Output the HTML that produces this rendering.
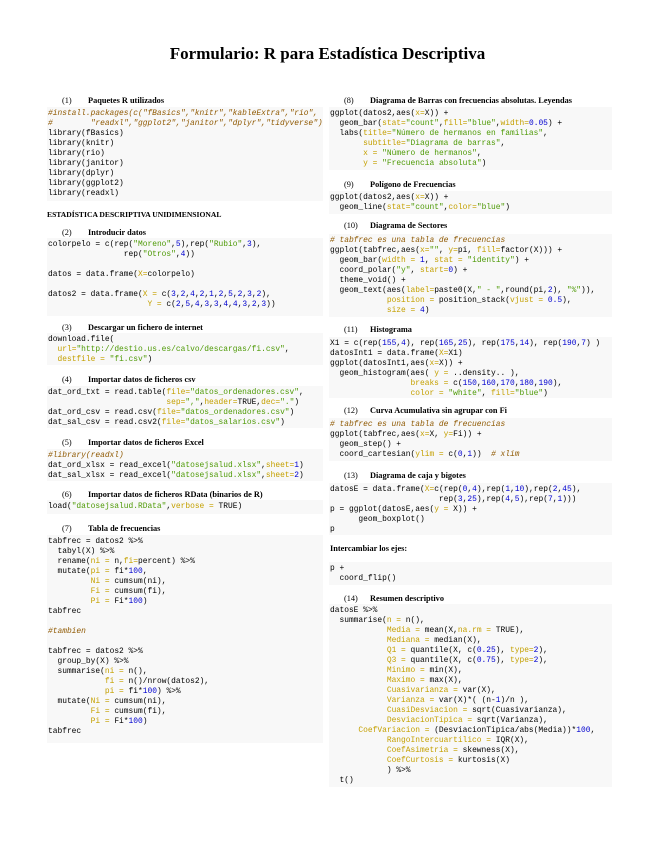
<!DOCTYPE html>
<html><head><meta charset="utf-8"><style>
body{margin:0;width:655px;height:848px;background:#fff;position:relative;overflow:hidden;font-family:"Liberation Serif",serif;color:#000}
.t{position:absolute;top:44px;left:0;width:655px;text-align:center;font-weight:bold;font-size:17px}
.h{position:absolute;font-size:8.3px;font-weight:bold;white-space:nowrap;line-height:10px}
.h i{font-style:normal;font-weight:normal;display:inline-block;width:26px}
pre{position:absolute;margin:0;background:#f8f8f8;font-family:"Liberation Mono",monospace;font-size:7.9px;line-height:10px;padding:2px 0 2px 1px;box-sizing:border-box;overflow:hidden;color:#000}
.L{left:47px;width:276px}.R{left:329px;width:283px}
.c{color:#8f5902;font-style:italic}.s{color:#4e9a06}.a{color:#c4a000}.n{color:#0000cf}.o{color:#000}
</style></head><body>
<div class="t">Formulario: R para Estadística Descriptiva</div>

<div class="h" style="left:62px;top:96px"><i>(1)</i>Paquetes R utilizados</div>
<pre class="L" style="top:107px;height:94px"><span class="c">#install.packages(c("fBasics","knitr","kableExtra","rio",
#        "readxl","ggplot2","janitor","dplyr","tidyverse"))</span>
library(fBasics)
library(knitr)
library(rio)
library(janitor)
library(dplyr)
library(ggplot2)
library(readxl)</pre>

<div class="h" style="left:47px;top:210px;font-size:7.6px">ESTADÍSTICA DESCRIPTIVA UNIDIMENSIONAL</div>

<div class="h" style="left:62px;top:228px"><i>(2)</i>Introducir datos</div>
<pre class="L" style="top:238px;height:78px">colorpelo <span class="o">=</span> c(rep(<span class="s">"Moreno"</span>,<span class="n">5</span>),rep(<span class="s">"Rubio"</span>,<span class="n">3</span>),
                rep(<span class="s">"Otros"</span>,<span class="n">4</span>))

datos <span class="o">=</span> data.frame(<span class="a">X=</span>colorpelo)

datos2 <span class="o">=</span> data.frame(<span class="a">X =</span> c(<span class="n">3</span>,<span class="n">2</span>,<span class="n">4</span>,<span class="n">2</span>,<span class="n">1</span>,<span class="n">2</span>,<span class="n">5</span>,<span class="n">2</span>,<span class="n">3</span>,<span class="n">2</span>),
                     <span class="a">Y =</span> c(<span class="n">2</span>,<span class="n">5</span>,<span class="n">4</span>,<span class="n">3</span>,<span class="n">3</span>,<span class="n">4</span>,<span class="n">4</span>,<span class="n">3</span>,<span class="n">2</span>,<span class="n">3</span>))</pre>

<div class="h" style="left:62px;top:323px"><i>(3)</i>Descargar un fichero de internet</div>
<pre class="L" style="top:333px;height:32px">download.file(
  <span class="a">url=</span><span class="s">"http://destio.us.es/calvo/descargas/fi.csv"</span>,
  <span class="a">destfile =</span> <span class="s">"fi.csv"</span>)</pre>

<div class="h" style="left:62px;top:375px"><i>(4)</i>Importar datos de ficheros csv</div>
<pre class="L" style="top:386px;height:42px">dat_ord_txt <span class="o">=</span> read.table(<span class="a">file=</span><span class="s">"datos_ordenadores.csv"</span>,
                         <span class="a">sep=</span><span class="s">","</span>,<span class="a">header=</span>TRUE,<span class="a">dec=</span><span class="s">"."</span>)
dat_ord_csv <span class="o">=</span> read.csv(<span class="a">file=</span><span class="s">"datos_ordenadores.csv"</span>)
dat_sal_csv <span class="o">=</span> read.csv2(<span class="a">file=</span><span class="s">"datos_salarios.csv"</span>)</pre>

<div class="h" style="left:62px;top:438px"><i>(5)</i>Importar datos de ficheros Excel</div>
<pre class="L" style="top:449px;height:32px"><span class="c">#library(readxl)</span>
dat_ord_xlsx <span class="o">=</span> read_excel(<span class="s">"datosejsalud.xlsx"</span>,<span class="a">sheet=</span><span class="n">1</span>)
dat_sal_xlsx <span class="o">=</span> read_excel(<span class="s">"datosejsalud.xlsx"</span>,<span class="a">sheet=</span><span class="n">2</span>)</pre>

<div class="h" style="left:62px;top:490px"><i>(6)</i>Importar datos de ficheros RData (binarios de R)</div>
<pre class="L" style="top:500px;height:14px">load(<span class="s">"datosejsalud.RData"</span>,<span class="a">verbose =</span> TRUE)</pre>

<div class="h" style="left:62px;top:524px"><i>(7)</i>Tabla de frecuencias</div>
<pre class="L" style="top:535px;height:208px">tabfrec <span class="o">=</span> datos2 <span class="o">%&gt;%</span>
  tabyl(X) <span class="o">%&gt;%</span>
  rename(<span class="a">ni =</span> n,<span class="a">fi=</span>percent) <span class="o">%&gt;%</span>
  mutate(<span class="a">pi =</span> fi<span class="o">*</span><span class="n">100</span>,
         <span class="a">Ni =</span> cumsum(ni),
         <span class="a">Fi =</span> cumsum(fi),
         <span class="a">Pi =</span> Fi<span class="o">*</span><span class="n">100</span>)
tabfrec

<span class="c">#tambien</span>

tabfrec <span class="o">=</span> datos2 <span class="o">%&gt;%</span>
  group_by(X) <span class="o">%&gt;%</span>
  summarise(<span class="a">ni =</span> n(),
            <span class="a">fi =</span> n()<span class="o">/</span>nrow(datos2),
            <span class="a">pi =</span> fi<span class="o">*</span><span class="n">100</span>) <span class="o">%&gt;%</span>
  mutate(<span class="a">Ni =</span> cumsum(ni),
         <span class="a">Fi =</span> cumsum(fi),
         <span class="a">Pi =</span> Fi<span class="o">*</span><span class="n">100</span>)
tabfrec</pre>

<div class="h" style="left:344px;top:96px"><i>(8)</i>Diagrama de Barras con frecuencias absolutas. Leyendas</div>
<pre class="R" style="top:107px;height:63px">ggplot(datos2,aes(<span class="a">x=</span>X)) <span class="o">+</span>
  geom_bar(<span class="a">stat=</span><span class="s">"count"</span>,<span class="a">fill=</span><span class="s">"blue"</span>,<span class="a">width=</span><span class="n">0.05</span>) <span class="o">+</span>
  labs(<span class="a">title=</span><span class="s">"Número de hermanos en familias"</span>,
       <span class="a">subtitle=</span><span class="s">"Diagrama de barras"</span>,
       <span class="a">x =</span> <span class="s">"Número de hermanos"</span>,
       <span class="a">y =</span> <span class="s">"Frecuencia absoluta"</span>)</pre>

<div class="h" style="left:344px;top:180px"><i>(9)</i>Polígono de Frecuencias</div>
<pre class="R" style="top:191px;height:23px">ggplot(datos2,aes(<span class="a">x=</span>X)) <span class="o">+</span>
  geom_line(<span class="a">stat=</span><span class="s">"count"</span>,<span class="a">color=</span><span class="s">"blue"</span>)</pre>

<div class="h" style="left:344px;top:221px"><i>(10)</i>Diagrama de Sectores</div>
<pre class="R" style="top:234px;height:83px"><span class="c"># tabfrec es una tabla de frecuencias</span>
ggplot(tabfrec,aes(<span class="a">x=</span><span class="s">""</span>, <span class="a">y=</span>pi, <span class="a">fill=</span>factor(X))) <span class="o">+</span>
  geom_bar(<span class="a">width =</span> <span class="n">1</span>, <span class="a">stat =</span> <span class="s">"identity"</span>) <span class="o">+</span>
  coord_polar(<span class="s">"y"</span>, <span class="a">start=</span><span class="n">0</span>) <span class="o">+</span>
  theme_void() <span class="o">+</span>
  geom_text(aes(<span class="a">label=</span>paste0(X,<span class="s">" - "</span>,round(pi,<span class="n">2</span>), <span class="s">"%"</span>)),
            <span class="a">position =</span> position_stack(<span class="a">vjust =</span> <span class="n">0.5</span>),
            <span class="a">size =</span> <span class="n">4</span>)</pre>

<div class="h" style="left:344px;top:325px"><i>(11)</i>Histograma</div>
<pre class="R" style="top:337px;height:61px">X1 <span class="o">=</span> c(rep(<span class="n">155</span>,<span class="n">4</span>), rep(<span class="n">165</span>,<span class="n">25</span>), rep(<span class="n">175</span>,<span class="n">14</span>), rep(<span class="n">190</span>,<span class="n">7</span>) )
datosInt1 <span class="o">=</span> data.frame(<span class="a">X=</span>X1)
ggplot(datosInt1,aes(<span class="a">x=</span>X)) <span class="o">+</span>
  geom_histogram(aes( <span class="a">y =</span> ..density.. ),
                 <span class="a">breaks =</span> c(<span class="n">150</span>,<span class="n">160</span>,<span class="n">170</span>,<span class="n">180</span>,<span class="n">190</span>),
                 <span class="a">color =</span> <span class="s">"white"</span>, <span class="a">fill=</span><span class="s">"blue"</span>)</pre>

<div class="h" style="left:344px;top:406px"><i>(12)</i>Curva Acumulativa sin agrupar con Fi</div>
<pre class="R" style="top:418px;height:43px"><span class="c"># tabfrec es una tabla de frecuencias</span>
ggplot(tabfrec,aes(<span class="a">x=</span>X, <span class="a">y=</span>Fi)) <span class="o">+</span>
  geom_step() <span class="o">+</span>
  coord_cartesian(<span class="a">ylim =</span> c(<span class="n">0</span>,<span class="n">1</span>))  <span class="c"># xlim</span></pre>

<div class="h" style="left:344px;top:471px"><i>(13)</i>Diagrama de caja y bigotes</div>
<pre class="R" style="top:483px;height:52px">datosE <span class="o">=</span> data.frame(<span class="a">X=</span>c(rep(<span class="n">0</span>,<span class="n">4</span>),rep(<span class="n">1</span>,<span class="n">10</span>),rep(<span class="n">2</span>,<span class="n">45</span>),
                       rep(<span class="n">3</span>,<span class="n">25</span>),rep(<span class="n">4</span>,<span class="n">5</span>),rep(<span class="n">7</span>,<span class="n">1</span>)))
p <span class="o">=</span> ggplot(datosE,aes(<span class="a">y =</span> X)) <span class="o">+</span>
      geom_boxplot()
p</pre>

<div class="h" style="left:330px;top:544px">Intercambiar los ejes:</div>
<pre class="R" style="top:562px;height:23px">p <span class="o">+</span>
  coord_flip()</pre>

<div class="h" style="left:344px;top:594px"><i>(14)</i>Resumen descriptivo</div>
<pre class="R" style="top:604px;height:183px">datosE <span class="o">%&gt;%</span>
  summarise(<span class="a">n =</span> n(),
            <span class="a">Media =</span> mean(X,<span class="a">na.rm =</span> TRUE),
            <span class="a">Mediana =</span> median(X),
            <span class="a">Q1 =</span> quantile(X, c(<span class="n">0.25</span>), <span class="a">type=</span><span class="n">2</span>),
            <span class="a">Q3 =</span> quantile(X, c(<span class="n">0.75</span>), <span class="a">type=</span><span class="n">2</span>),
            <span class="a">Minimo =</span> min(X),
            <span class="a">Maximo =</span> max(X),
            <span class="a">Cuasivarianza =</span> var(X),
            <span class="a">Varianza =</span> var(X)<span class="o">*</span>( (n<span class="o">-</span><span class="n">1</span>)<span class="o">/</span>n ),
            <span class="a">CuasiDesviacion =</span> sqrt(Cuasivarianza),
            <span class="a">DesviacionTipica =</span> sqrt(Varianza),
      <span class="a">CoefVariacion =</span> (DesviacionTipica<span class="o">/</span>abs(Media))<span class="o">*</span><span class="n">100</span>,
            <span class="a">RangoIntercuartilico =</span> IQR(X),
            <span class="a">CoefAsimetria =</span> skewness(X),
            <span class="a">CoefCurtosis =</span> kurtosis(X)
            ) <span class="o">%&gt;%</span>
  t()</pre>
</body></html>
